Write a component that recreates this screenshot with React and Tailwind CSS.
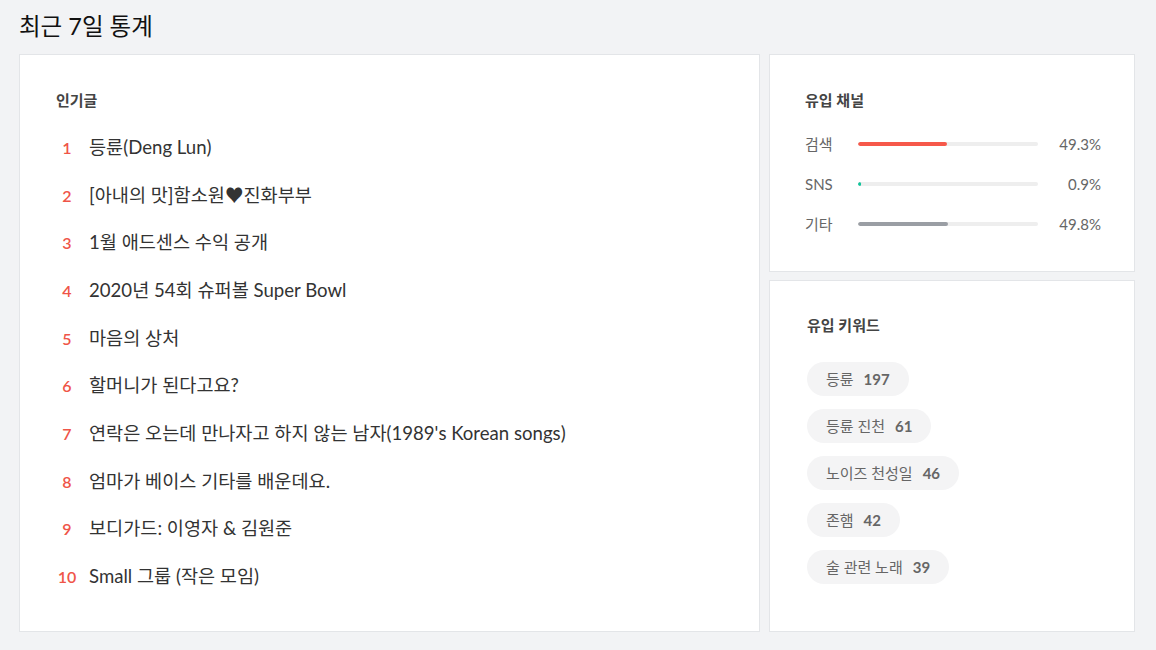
const posts = [
  "등륜(Deng Lun)",
  "[아내의 맛]함소원♥진화부부",
  "1월 애드센스 수익 공개",
  "2020년 54회 슈퍼볼 Super Bowl",
  "마음의 상처",
  "할머니가 된다고요?",
  "연락은 오는데 만나자고 하지 않는 남자(1989's Korean songs)",
  "엄마가 베이스 기타를 배운데요.",
  "보디가드: 이영자 & 김원준",
  "Small 그룹 (작은 모임)",
];

const channels = [
  { name: "검색", pct: 49.3, color: "bg-[#f6584a]" },
  { name: "SNS", pct: 0.9, color: "bg-[#10c49b]" },
  { name: "기타", pct: 49.8, color: "bg-[#9a9ea4]" },
];

const keywords = [
  { word: "등륜", count: 197 },
  { word: "등륜 진천", count: 61 },
  { word: "노이즈 천성일", count: 46 },
  { word: "존햄", count: 42 },
  { word: "술 관련 노래", count: 39 },
];

const font = { fontFamily: 'Lato, "Noto Sans CJK KR", sans-serif' };

function App() {
  return (
    <div
      className="w-[1156px] h-[650px] bg-[#f2f3f5] pt-[11px] pl-[19px] pr-[21px] overflow-hidden"
      style={font}
    >
      <h1 className="text-[23.5px] leading-[30px] text-[#111] font-normal mb-[13px]">최근 7일 통계</h1>

      <div className="flex gap-[9px]">
        <section className="w-[741px] h-[578px] bg-white border border-[#e3e5e8] pl-[36px] pt-[35px]">
          <h2 className="text-[15px] leading-[20px] text-[#444] font-semibold">인기글</h2>
          <ol className="mt-[14px]">
            {posts.map((p, i) => (
              <li key={i} className="h-[47.7px] flex items-center">
                <span className="w-[22px] text-center text-[16px] text-[#ef5548] font-semibold">{i + 1}</span>
                <span className="ml-[11px] text-[18.6px] text-[#333] font-normal">{p}</span>
              </li>
            ))}
          </ol>
        </section>

        <div className="w-[366px] flex flex-col gap-[8px]">
          <section className="h-[218px] bg-white border border-[#e3e5e8] pl-[35px] pr-[33px] pt-[35px]">
            <h2 className="text-[15px] leading-[20px] text-[#444] font-semibold">유입 채널</h2>
            <div className="mt-[14px]">
              {channels.map((c) => (
                <div key={c.name} className="h-[40px] flex items-center">
                  <span className="w-[53px] text-[15px] text-[#666]">{c.name}</span>
                  <div className="w-[180px] h-[4px] rounded-full bg-[#eeeeee] overflow-hidden">
                    <div className={`h-full rounded-full ${c.color}`} style={{ width: `${Math.max(c.pct, 1.5)}%` }} />
                  </div>
                  <span className="flex-1 text-right text-[15px] text-[#666]">{c.pct}%</span>
                </div>
              ))}
            </div>
          </section>

          <section className="flex-1 bg-white border border-[#e3e5e8] pl-[37px] pt-[34px]">
            <h2 className="text-[15px] leading-[20px] text-[#444] font-semibold">유입 키워드</h2>
            <div className="mt-[27px] flex flex-col items-start gap-[13px]">
              {keywords.map((k) => (
                <span
                  key={k.word}
                  className="h-[34px] rounded-full bg-[#f4f4f5] pl-[19px] pr-[19px] flex items-center text-[15px] text-[#666]"
                >
                  {k.word}
                  <b className="ml-[10px] font-bold text-[#666]">{k.count}</b>
                </span>
              ))}
            </div>
          </section>
        </div>
      </div>
    </div>
  );
}

export default App;
